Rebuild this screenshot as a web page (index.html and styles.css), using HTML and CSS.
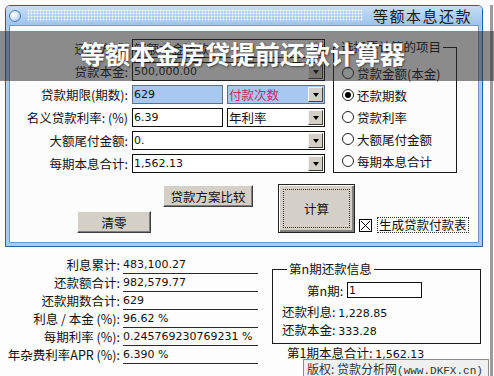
FILE: index.html
```html
<!DOCTYPE html>
<html lang="zh-CN">
<head>
    <meta charset="UTF-8">
    <meta name="viewport" content="width=device-width, initial-scale=1.0">
    <title>等额本息还款</title>
    <link rel="stylesheet" href="styles.css">
</head>
<body>
<div class="screen">
    <div class="window">
        <div class="titlebar">
            <span class="orb"></span>
            <span class="dots"></span>
            <span class="title">等额本息还款</span>
        </div>
        <div class="client">
            <div class="form-area">
                <div class="fields">
                    <div class="row">
                        <span class="label">还款方式:</span>
                        <div class="combo full"><span class="text">等额本金还款</span><span class="drop"></span></div>
                    </div>
                    <div class="row">
                        <span class="label">贷款本金:</span>
                        <div class="combo full"><span class="text num">500,000.00</span><span class="drop"></span></div>
                    </div>
                    <div class="row">
                        <span class="label">贷款期限(期数):</span>
                        <div class="edit half selected num">629</div>
                        <div class="combo rest selected"><span class="text red">付款次数</span><span class="drop"></span></div>
                    </div>
                    <div class="row">
                        <span class="label">名义贷款利率: (%)</span>
                        <div class="edit half num">6.39</div>
                        <div class="combo rest"><span class="text">年利率</span><span class="drop"></span></div>
                    </div>
                    <div class="row">
                        <span class="label">大额尾付金额:</span>
                        <div class="combo full"><span class="text num">0.</span><span class="drop"></span></div>
                    </div>
                    <div class="row">
                        <span class="label">每期本息合计:</span>
                        <div class="combo full"><span class="text num">1,562.13</span><span class="drop"></span></div>
                    </div>
                </div>
                <fieldset class="group target">
                    <legend>选择要计算的项目</legend>
                    <div class="radios">
                        <div class="radio"><span class="dot"></span>贷款金额(本金)</div>
                        <div class="radio checked"><span class="dot"></span>还款期数</div>
                        <div class="radio"><span class="dot"></span>贷款利率</div>
                        <div class="radio"><span class="dot"></span>大额尾付金额</div>
                        <div class="radio"><span class="dot"></span>每期本息合计</div>
                    </div>
                </fieldset>
            </div>
            <div class="actions">
                <div class="left-buttons">
                    <button class="btn compare">贷款方案比较</button>
                    <button class="btn clear">清零</button>
                </div>
                <button class="btn calc"><span class="focus">计算</span></button>
                <div class="check">
                    <svg class="box" width="13" height="13" viewBox="0 0 13 13">
                        <rect x="0.5" y="0.5" width="12" height="12" fill="#fff" stroke="#000"/>
                        <path d="M2 2 L11 11 M11 2 L2 11" stroke="#000" stroke-width="1"/>
                    </svg>
                    <span class="check-label">生成贷款付款表</span>
                </div>
            </div>
        </div>
    </div>

    <div class="results">
        <div class="totals">
            <div class="total-row"><span class="total-label">利息累计:</span><span class="total-value">483,100.27</span></div>
            <div class="total-row"><span class="total-label">还款额合计:</span><span class="total-value">982,579.77</span></div>
            <div class="total-row"><span class="total-label">还款期数合计:</span><span class="total-value">629</span></div>
            <div class="total-row"><span class="total-label">利息 / 本金 (%):</span><span class="total-value">96.62 %</span></div>
            <div class="total-row"><span class="total-label">每期利率 (%):</span><span class="total-value">0.245769230769231 %</span></div>
            <div class="total-row"><span class="total-label">年杂费利率APR (%):</span><span class="total-value">6.390 %</span></div>
        </div>
        <div class="period-col">
            <fieldset class="group period">
                <legend>第n期还款信息</legend>
                <div class="period-no">第n期: <span class="edit small num">1</span></div>
                <div class="period-line first">还款利息: <span class="num">1,228.85</span></div>
                <div class="period-line">还款本金: <span class="num">333.28</span></div>
            </fieldset>
            <div class="period-sum">第1期本息合计: <span class="num">1,562.13</span></div>
        </div>
    </div>

    <div class="banner">等额本金房贷提前还款计算器</div>
    <div class="watermark">版权: 贷款分析网<span class="site">(www.DKFX.cn)</span></div>
</div>
</body>
</html>
```

FILE: styles.css
```css
* {
    box-sizing: border-box;
}
body {
    margin: 0;
    background: #fdfdfd;
    font-family: "Noto Sans CJK SC", sans-serif;
    font-size: 12.5px;
    color: #111;
}
.screen {
    position: relative;
    width: 493px;
    height: 376px;
    border-right: 3px solid #9c9c9c;
    border-bottom: 2px solid #bdbdbd;
}
.num {
    font-family: "DejaVu Sans", "Noto Sans CJK SC", sans-serif;
    font-size: 11px;
}

/* window frame */
.window {
    margin: 5px 0 0 5px;
    width: 478px;
    height: 242px;
    border: 1px solid #2f5e9c;
    border-radius: 5px 5px 0 0;
    background: #a9cbef;
    padding: 0 3px 3px;
    display: flex;
    flex-direction: column;
}
.titlebar {
    height: 19px;
    margin: 0 -3px;
    padding: 0 10px 0 3px;
    display: flex;
    align-items: center;
    border-radius: 4px 4px 0 0;
    background: linear-gradient(#c6def7, #9dc4ec);
}
.orb {
    width: 12px;
    height: 12px;
    border-radius: 50%;
    border: 1px solid #4f7db6;
    background: radial-gradient(circle at 35% 35%, #fff 0, #d6e8fa 45%, #8ab6e6 100%);
}
.dots {
    flex: 1;
    height: 13px;
    margin: 0 10px 0 6px;
    background-image: radial-gradient(circle, #fff 0.8px, transparent 1.1px);
    background-size: 3px 3px;
}
.title {
    font-size: 15px;
    letter-spacing: 1.5px;
    color: #1b1b1b;
    line-height: 19px;
}
.client {
    flex: 1;
    background: #fcfcfc;
    border: 1px solid #6f97c8;
    padding-top: 13px;
}

/* input rows */
.form-area {
    display: flex;
    align-items: flex-start;
}
.fields {
    display: flex;
    flex-direction: column;
    gap: 4px;
}
.row {
    display: flex;
    gap: 4px;
    height: 19px;
}
.label {
    width: 118px;
    text-align: right;
    line-height: 19px;
    white-space: nowrap;
}
.combo, .edit {
    height: 19px;
    border: 1px solid #111;
    background: #fff;
    display: flex;
    align-items: center;
}
.combo .text, .edit {
    padding-left: 1px;
    line-height: 17px;
}
.combo .text {
    flex: 1;
}
.full {
    width: 193px;
}
.half {
    width: 91px;
}
.rest {
    width: 98px;
}
.selected {
    background: #a7c9f0;
    border-color: #5f6f85;
}
.red {
    color: #c42e68;
}
.drop {
    width: 15px;
    height: 15px;
    margin-right: 1px;
    background: #d4d0c8;
    border: 1px solid;
    border-color: #f4f4f4 #404040 #404040 #f4f4f4;
    display: flex;
    align-items: center;
    justify-content: center;
}
.drop::after {
    content: "";
    border-left: 3.5px solid transparent;
    border-right: 3.5px solid transparent;
    border-top: 4px solid #000;
    margin-top: 1px;
}

/* group boxes */
.group {
    margin: 0;
    padding: 0;
    border: 1px solid #1a1a1a;
    min-width: 0;
}
.group legend {
    padding: 0 2px;
    margin-left: 5px;
    line-height: 14px;
}
.target {
    width: 124px;
    margin-left: 8px;
    margin-top: 1px;
}
.radios {
    padding-top: 8px;
}
.radio {
    height: 22px;
    display: flex;
    align-items: center;
    gap: 3px;
    padding-left: 8px;
    white-space: nowrap;
}
.dot {
    width: 12px;
    height: 12px;
    border-radius: 50%;
    border: 1px solid #222;
    background: #fff;
    display: flex;
    align-items: center;
    justify-content: center;
}
.checked .dot::after {
    content: "";
    width: 6px;
    height: 6px;
    border-radius: 50%;
    background: #000;
}

/* buttons */
.actions {
    display: flex;
    margin-top: 11px;
}
.left-buttons {
    width: 243px;
    padding-top: 1px;
    display: flex;
    flex-direction: column;
}
.btn {
    font-family: "Noto Sans CJK SC", sans-serif;
    font-size: 12.5px;
    color: #111;
    background: #d4d0c8;
    border: 1px solid;
    border-color: #fff #404040 #404040 #fff;
    box-shadow: inset -1px -1px #808080;
    padding: 0;
}
.compare {
    align-self: flex-end;
    width: 90px;
    height: 22px;
}
.clear {
    margin: 4px 0 0 67px;
    width: 74px;
    height: 22px;
}
.calc {
    margin-left: 25px;
    width: 77px;
    height: 49px;
    border: 1px solid #222;
    box-shadow: inset 1px 1px #fff, inset -2px -2px #808080;
    padding: 4px;
    display: flex;
}
.calc .focus {
    flex: 1;
    border: 1px dotted #333;
    display: flex;
    align-items: center;
    justify-content: center;
}
.check {
    margin-left: 4px;
    align-self: flex-end;
    height: 16px;
    display: flex;
    align-items: center;
    gap: 5px;
}
.check-label {
    border: 1px dotted #333;
    padding: 0 1px;
    line-height: 14px;
    white-space: nowrap;
}

/* results */
.results {
    display: flex;
    margin-top: 9px;
}
.total-row {
    display: flex;
    height: 18px;
}
.total-label {
    width: 120px;
    text-align: right;
    line-height: 18px;
    white-space: nowrap;
}
.total-value {
    width: 135px;
    margin-left: 3px;
    border-bottom: 1px solid #2a2a2a;
    font-family: "DejaVu Sans", sans-serif;
    font-size: 11px;
    line-height: 17px;
    white-space: nowrap;
}
.period-col {
    margin-left: 14px;
    margin-top: 6px;
}
.period {
    width: 209px;
    padding: 0 0 4px 9px;
}
.period-no {
    margin-top: 6px;
    padding-left: 25px;
    height: 16px;
    display: flex;
    align-items: center;
    gap: 4px;
}
.edit.small {
    width: 75px;
    height: 16px;
}
.period-line {
    height: 18px;
    line-height: 18px;
}
.period-line.first {
    margin-top: 5px;
}
.period-sum {
    padding-left: 15px;
    height: 18px;
    line-height: 18px;
}

/* overlays */
.banner {
    position: absolute;
    left: 0;
    top: 26px;
    width: 494px;
    height: 50px;
    padding-left: 80px;
    background: rgba(45, 45, 45, 0.55);
    color: #fff;
    font-size: 25px;
    font-weight: 700;
    line-height: 44px;
    text-shadow: 1px 1px 2px rgba(0, 0, 0, 0.5);
}
.watermark {
    position: absolute;
    left: 303px;
    top: 354px;
    width: 186px;
    height: 19px;
    padding-left: 3px;
    background: rgba(238, 238, 238, 0.9);
    border: 1px solid #8a8a8a;
    color: #333;
    font-size: 12px;
    line-height: 17px;
    white-space: nowrap;
}
.watermark .site {
    font-family: "Liberation Mono", monospace;
    font-size: 11px;
}
```
